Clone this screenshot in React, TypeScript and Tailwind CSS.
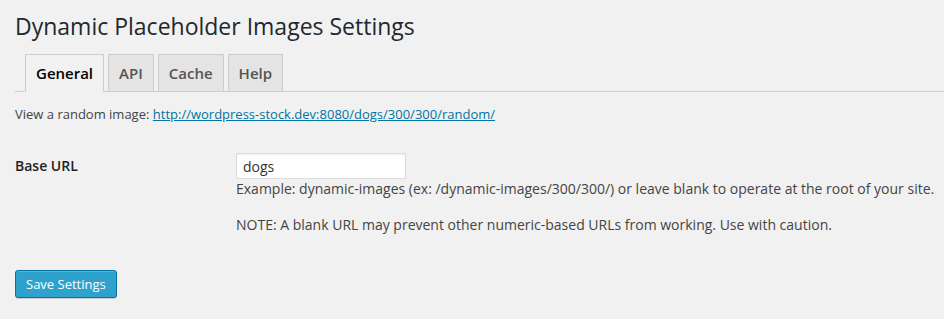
export default function App() {
  const tabs = ["General", "API", "Cache", "Help"];
  return (
    <div className="min-h-screen bg-[#f1f1f1] pl-[15px] font-['Open_Sans',sans-serif] text-[#444]">
      {/* Page title */}
      <h1 className="pt-[12px] text-[23px] font-normal leading-[29px] text-[#23282d]">
        Dynamic Placeholder Images Settings
      </h1>

      {/* Tabs */}
      <div className="mt-[13px] flex items-end gap-[4px] border-b border-[#ccc] pl-[10px]">
        {tabs.map((tab, i) => (
          <a
            key={tab}
            className={
              i === 0
                ? "-mb-px border border-[#ccc] border-b-[#f1f1f1] bg-[#f1f1f1] px-[10px] py-[6px] text-[15px] font-semibold leading-[24px] text-black"
                : "-mb-px border border-[#ccc] bg-[#e4e4e4] px-[10px] py-[6px] text-[15px] font-semibold leading-[24px] text-[#555]"
            }
          >
            {tab}
          </a>
        ))}
      </div>

      <p className="mt-[12px] text-[13px] leading-[20px]">
        View a random image:{" "}
        <a className="text-[#0074a2] underline">http://wordpress-stock.dev:8080/dogs/300/300/random/</a>
      </p>

      {/* Settings row */}
      <div className="mt-[29px] flex">
        <div className="w-[221px] text-[14px] font-semibold leading-[26px] text-[#222]">Base URL</div>
        <div className="text-[14px] leading-[20px]">
          <input
            type="text"
            defaultValue="dogs"
            className="h-[26px] w-[170px] border border-[#ddd] bg-white px-[6px] text-[14px] text-[#333] shadow-[inset_0_1px_2px_rgba(0,0,0,0.07)] outline-none"
          />
          <p>
            Example: dynamic-images (ex: /dynamic-images/300/300/) or leave blank to operate at the root of your site.
          </p>
          <p className="mt-[16px]">
            NOTE: A blank URL may prevent other numeric-based URLs from working. Use with caution.
          </p>
        </div>
      </div>

      <button className="mt-[35px] h-[28px] rounded-[3px] border border-[#0074a2] bg-[#2ea2cc] px-[10px] text-[13px] leading-[26px] text-white shadow-[inset_0_1px_0_rgba(120,200,230,0.5),0_1px_0_rgba(0,0,0,0.15)]">
        Save Settings
      </button>
    </div>
  );
}
